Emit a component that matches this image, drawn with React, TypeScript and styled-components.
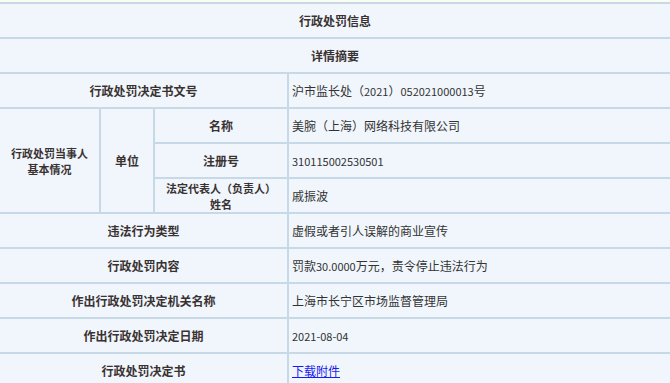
import React from 'react';
import styled, {createGlobalStyle} from 'styled-components';

const GlobalStyle = createGlobalStyle`
  html, body {
    margin: 0;
    padding: 0;
    overflow: hidden;
    background: #fdfcf2;
  }
  * {
    box-sizing: border-box;
  }
`;

const Page = styled.div`
  padding-top: 2px;
  margin-left: -2px;
  font-family: "Noto Sans CJK SC", "Liberation Sans", sans-serif;
  font-size: 12px;
  color: #333;
`;

const Table = styled.table`
  border-collapse: separate;
  border-spacing: 2px;
  background: #c7d8e6;
  table-layout: fixed;
  width: 674px;
`;

const Label = styled.td<{$lines?: boolean}>`
  height: 33px;
  padding: 0 2px;
  background: #f0f6fc;
  text-align: center;
  vertical-align: middle;
  font-weight: bold;
  font-size: ${p => (p.$lines ? '11px' : '12px')};
  line-height: 16px;
  color: #3a3232;
`;

const Line = styled.span`
  display: block;
`;

const Value = styled.td`
  height: 33px;
  padding: 0 3px;
  background: #f0f6fc;
  text-align: left;
  vertical-align: middle;
  line-height: 16px;
  white-space: nowrap;
`;

// digits in the source page are narrow half-width glyphs
const Num = styled.span`
  font-size: 11px;
`;

const Link = styled.a`
  color: #1a1aee;
  text-decoration: underline;
`;

const rows: {label: string; value: React.ReactNode}[] = [
  {label: '违法行为类型', value: '虚假或者引人误解的商业宣传'},
  {
    label: '行政处罚内容',
    value: (
      <>
        罚款<Num>30.0000</Num>万元，责令停止违法行为
      </>
    ),
  },
  {label: '作出行政处罚决定机关名称', value: '上海市长宁区市场监督管理局'},
  {label: '作出行政处罚决定日期', value: <Num>2021-08-04</Num>},
  {label: '行政处罚决定书', value: <Link href="#">下载附件</Link>},
];

const App = () => (
  <Page>
    <GlobalStyle />
    <Table>
      <colgroup>
        <col style={{width: 99}} />
        <col style={{width: 52}} />
        <col style={{width: 132}} />
        <col style={{width: 381}} />
      </colgroup>
      <tbody>
        <tr>
          <Label colSpan={4}>行政处罚信息</Label>
        </tr>
        <tr>
          <Label colSpan={4}>详情摘要</Label>
        </tr>
        <tr>
          <Label colSpan={3}>行政处罚决定书文号</Label>
          <Value>
            沪市监长处（<Num>2021</Num>）<Num>052021000013</Num>号
          </Value>
        </tr>
        <tr>
          <Label rowSpan={3} $lines>
            <Line>行政处罚当事人</Line>
            <Line>基本情况</Line>
          </Label>
          <Label rowSpan={3}>单位</Label>
          <Label>名称</Label>
          <Value>美腕（上海）网络科技有限公司</Value>
        </tr>
        <tr>
          <Label>注册号</Label>
          <Value>
            <Num>310115002530501</Num>
          </Value>
        </tr>
        <tr>
          <Label $lines>
            <Line>法定代表人（负责人）</Line>
            <Line>姓名</Line>
          </Label>
          <Value>戚振波</Value>
        </tr>
        {rows.map(row => (
          <tr key={row.label}>
            <Label colSpan={3}>{row.label}</Label>
            <Value>{row.value}</Value>
          </tr>
        ))}
      </tbody>
    </Table>
  </Page>
);

export default App;
